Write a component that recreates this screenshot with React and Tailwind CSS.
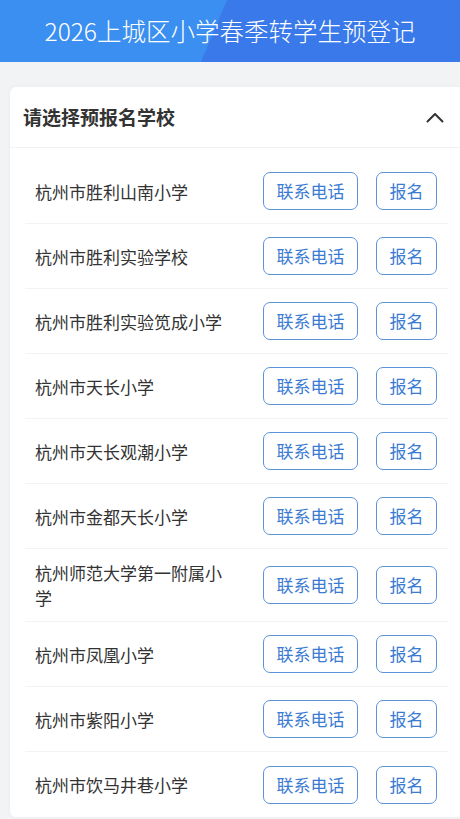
import React from 'react'

const schools = [
  '杭州市胜利山南小学',
  '杭州市胜利实验学校',
  '杭州市胜利实验笕成小学',
  '杭州市天长小学',
  '杭州市天长观潮小学',
  '杭州市金都天长小学',
  '杭州师范大学第一附属小学',
  '杭州市凤凰小学',
  '杭州市紫阳小学',
  '杭州市饮马井巷小学',
]

export default function App() {
  return (
    <div className='min-h-[819px] bg-[#f2f3f5] font-["Noto_Sans_CJK_SC","Noto_Sans",sans-serif]'>
      <header className='relative h-[62px] overflow-hidden bg-[#3a8ff0] flex items-center justify-center'>
        <div className='absolute inset-0 bg-[#3a79e9] [clip-path:polygon(227px_0,100%_0,100%_100%,201px_100%)]' />
        <h1 className='relative text-white text-[24.5px] font-light leading-none'>2026上城区小学春季转学生预登记</h1>
      </header>

      <section className='mt-[25px] ml-[10px] bg-white rounded-l-[6px] shadow-[0_0_4px_rgba(0,0,0,0.04)]'>
        <div className='h-[61px] flex items-center justify-between pl-[13px] pr-[16px] border-b border-[#f2f2f2]'>
          <p className='text-[19px] font-bold text-[#333]'>请选择预报名学校</p>
          <svg width='18' height='11' viewBox='0 0 18 11' fill='none'>
            <path d='M1.5 9.5 L9 2 L16.5 9.5' stroke='#333' strokeWidth='2' strokeLinecap='round' strokeLinejoin='round' />
          </svg>
        </div>

        <ul className='ml-[15px] mr-[12px] pt-[11px]'>
          {schools.map((name, i) => (
            <li
              key={name}
              className={'min-h-[65px] py-[11px] flex items-center pl-[10px] pr-[11px] ' + (i < schools.length - 1 ? 'border-b border-[#f3f3f3]' : '')}
            >
              <p className='flex-1 mr-[30px] text-[17px] leading-[25px] text-[#333]'>{name}</p>
              <button className='h-[38px] w-[95px] rounded-[7px] border border-[#5b95d8] text-[#3a7bd3] text-[17px]'>联系电话</button>
              <button className='ml-[18px] h-[38px] w-[61px] rounded-[7px] border border-[#5b95d8] text-[#3a7bd3] text-[17px]'>报名</button>
            </li>
          ))}
        </ul>
      </section>
    </div>
  )
}
